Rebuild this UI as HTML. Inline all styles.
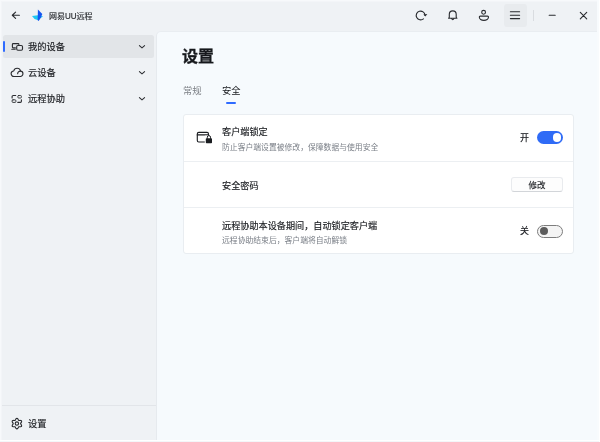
<!DOCTYPE html>
<html lang="zh-CN">
<head>
<meta charset="utf-8">
<title>网易UU远程</title>
<style>
*{box-sizing:border-box;margin:0;padding:0}
html,body{width:600px;height:442px;overflow:hidden;background:#fff}
body{font-family:"Liberation Sans","Noto Sans CJK SC",sans-serif;color:#1b1d21;position:relative}
.abs{position:absolute}
.tx{position:absolute;white-space:nowrap;will-change:transform}
#win{left:1px;top:1px;width:596.2px;height:438.5px;background:#eff2f5;border-left:1px solid #f3f5f8;border-top:1px solid #f3f5f8}
#edgeL{left:0;top:0;width:1px;height:440px;background:#f7f9fb}
#edgeT{left:0;top:0;width:598.5px;height:1px;background:#f7f9fb}
#edgeR{left:597.2px;top:0;width:1.4px;height:439.5px;background:#f8fbfd}
#edgeB{left:0;top:441px;width:598.6px;height:1px;background:#f3f6f9}
#main{left:156px;top:31px;width:441.2px;height:408.5px;background:#f6fafd;border-top-left-radius:5px;border-left:1px solid #e6eaee;border-top:1px solid #e9edf1}
#navsel{left:3px;top:35px;width:150.6px;height:23.3px;border-radius:2.5px;background:#e2e5e8}
#navbar{left:2.8px;top:41px;width:1.8px;height:11px;border-radius:1px;background:#2f6bff}
.nl{font-size:9.25px;line-height:14px;left:28.1px;color:#1b1d21;-webkit-text-stroke:0.15px #1b1d21;margin-top:0.3px}
#apptitle{left:49.3px;top:9.8px;font-size:8px;line-height:13px;color:#1f2125;-webkit-text-stroke:0.15px #1f2125}
#apptitle .uu{display:inline-block;transform:scaleY(1.18);transform-origin:50% 80%}
#footline{left:1.5px;top:405px;width:155px;height:1px;background:#e2e5e9}
h1{will-change:transform;-webkit-text-stroke:0.3px #17191d;position:absolute;left:182.4px;top:45.1px;font-size:16px;line-height:24px;font-weight:700;color:#17191d;white-space:nowrap}
.tab{font-size:9.3px;line-height:14px;top:84.3px}
#card{left:183px;top:114px;width:391px;height:140px;background:#fff;border:1px solid #e9edf1;border-radius:3px}
.t{font-size:9.15px;line-height:14px;color:#1b1d21;left:221.5px;-webkit-text-stroke:0.15px #1b1d21;margin-top:0.4px}
.d{font-size:7.82px;line-height:12px;color:#7a7f87;left:221.5px;margin-top:0.5px}
.sep{position:absolute;left:184px;width:389px;height:1px;background:#eceff2}
.sw{position:absolute;left:537px;width:26px;height:13px;border-radius:7px}
.sw.on{background:#2f6bf6}
.sw.on i{position:absolute;right:2.3px;top:2.4px;width:8.2px;height:8.2px;border-radius:50%;background:#fff}
.sw.off{background:#f4f4f4;border:1px solid #7d7d7d}
.sw.off i{position:absolute;left:1.5px;top:1.5px;width:8px;height:8px;border-radius:50%;background:#5c5c5c}
.swl{font-size:9px;line-height:13px;color:#1b1d21;left:520.2px;-webkit-text-stroke:0.15px #1b1d21;margin-top:0.6px}
#btn{will-change:transform;position:absolute;left:511px;top:177px;width:52px;height:15px;border:1px solid #e9ebee;border-bottom-color:#d2d5d9;border-radius:3px;background:#fdfdfd;font-size:8.5px;line-height:14.4px;text-align:center;color:#1b1d21;-webkit-text-stroke:0.15px #1b1d21}
#menubg{left:503.7px;top:4.2px;width:23px;height:22.5px;border-radius:3px;background:#e8ebee}
#tdiv{left:533px;top:9.7px;width:1px;height:11.6px;background:#d9dce0}
svg#ico{position:absolute;left:0;top:0}
</style>
</head>
<body>
<div id="win" class="abs"></div>
<div id="edgeL" class="abs"></div><div id="edgeT" class="abs"></div><div id="edgeR" class="abs"></div><div id="edgeB" class="abs"></div>
<div id="menubg" class="abs"></div>
<div id="tdiv" class="abs"></div>
<div id="apptitle" class="tx">网易<span class="uu">UU</span>远程</div>

<div id="navsel" class="abs"></div>
<div id="navbar" class="abs"></div>
<div class="tx nl" style="top:40px">我的设备</div>
<div class="tx nl" style="top:66px">云设备</div>
<div class="tx nl" style="top:92px">远程协助</div>
<div id="footline" class="abs"></div>
<div class="tx nl" style="top:416.5px">设置</div>

<div id="main" class="abs"></div>
<h1>设置</h1>
<div class="tx tab" style="left:182.8px;color:#7d8086">常规</div>
<div class="tx tab" style="left:222px;color:#17191d">安全</div>
<div class="abs" style="left:226px;top:102px;width:10.3px;height:2px;border-radius:1px;background:#2f6bff"></div>

<div id="card" class="abs"></div>
<div class="sep" style="top:161px"></div>
<div class="sep" style="top:207px"></div>
<div class="tx t" style="top:125.1px">客户端锁定</div>
<div class="tx d" style="top:141.2px">防止客户端设置被修改，保障数据与使用安全</div>
<div class="tx swl" style="top:131.3px">开</div>
<span class="sw on" style="top:131px"><i></i></span>
<div class="tx t" style="top:178.3px">安全密码</div>
<div id="btn">修改</div>
<div class="tx t" style="top:218.3px">远程协助本设备期间，自动锁定客户端</div>
<div class="tx d" style="top:234.4px">远程协助结束后，客户端将自动解锁</div>
<div class="tx swl" style="top:224.5px">关</div>
<span class="sw off" style="top:224.5px"><i></i></span>

<svg id="ico" width="600" height="442" viewBox="0 0 600 442" fill="none" stroke="#2a2c30" stroke-width="1.12" stroke-linecap="round" stroke-linejoin="round">
  <!-- back arrow -->
  <path d="M19.4 15.25H12.4M15.6 12.1L12.3 15.25L15.6 18.4"/>
  <!-- logo -->
  <g stroke="none">
    <path d="M32 16.1L37.9 15.3L43.2 16.4L40.6 17.9L38.3 20.3L34.6 18.9z" fill="#1fc8f2"/>
    <path d="M37.9 9.6L42.3 13.9L41 17.2L38.7 20.9L37.7 20.2z" fill="#1456f0"/>
  </g>
  <!-- refresh -->
  <path d="M423.43 18.87A4.4 4.4 0 1 1 425 15.1"/>
  <path d="M423.4 14.5L427.3 14L425.4 16.6z" fill="#2a2c30" stroke="none"/>
  <!-- bell -->
  <path d="M448.6 18.3L449.3 17.2V14.3A3.45 3.45 0 0 1 456.2 14.3V17.2L456.9 18.3z"/>
  <path d="M451.6 18.6Q452.75 20.8 453.9 18.6"/>
  <!-- user -->
  <circle cx="483.6" cy="12.3" r="1.9"/>
  <path d="M480.3 16.1H487.5A1 1 0 0 1 488.5 17.1A4.6 3.3 0 0 1 479.3 17.1A1 1 0 0 1 480.3 16.1z"/>
  <!-- menu -->
  <path d="M510.4 11.8H519.6M510.4 15.2H519.6M510.4 18.6H519.6"/>
  <!-- min / close -->
  <path d="M549.2 15.3H555.2"/>
  <path d="M580.3 12.4L586.7 18.8M586.7 12.4L580.3 18.8"/>

  <!-- nav icon 1: devices -->
  <path d="M15.4 47.9H13.2A0.8 0.8 0 0 1 12.4 47.1V44.4A0.8 0.8 0 0 1 13.2 43.6H18.1A0.8 0.8 0 0 1 18.9 44.4V44.5"/>
  <path d="M11.8 49.3H15.2"/>
  <rect x="16.7" y="45.5" width="5.8" height="4.7" rx="1.2"/>
  <!-- nav icon 2: cloud -->
  <path d="M20.3 76.45H14A2.75 2.75 0 0 1 13.75 70.95A3.5 3.5 0 0 1 20.55 70.85"/>
  <path d="M20.3 76.45A2.65 2.65 0 1 0 17.65 73.8"/>
  <!-- nav icon 3: remote -->
  <path d="M12.1 97.9V96.6A1.1 1.1 0 0 1 13.2 95.5H15.7"/>
  <rect x="17.8" y="95.5" width="3.6" height="2.5" rx="0.9" stroke-width="0.9"/>
  <rect x="12.1" y="99.8" width="3.8" height="2.6" rx="0.9" stroke-width="0.9"/>
  <path d="M21.4 99.8V101.3A1.1 1.1 0 0 1 20.3 102.4H17.8"/>
  <!-- chevrons -->
  <path d="M139.4 45.6L142 47.9L144.6 45.6M139.4 71.6L142 73.9L144.6 71.6M139.4 97.6L142 99.9L144.6 97.6" stroke-width="1.05" stroke="#2a2c30"/>
  <!-- gear -->
  <path d="M16.90 418.30L17.35 418.43L17.75 418.77L18.06 419.25L18.30 419.75L18.51 420.15L18.75 420.40L19.08 420.48L19.54 420.46L20.08 420.42L20.65 420.45L21.15 420.62L21.49 420.95L21.61 421.41L21.50 421.92L21.25 422.44L20.94 422.89L20.69 423.27L20.60 423.60L20.69 423.93L20.94 424.31L21.25 424.76L21.50 425.28L21.61 425.79L21.49 426.25L21.15 426.58L20.65 426.75L20.08 426.78L19.54 426.74L19.08 426.72L18.75 426.80L18.51 427.05L18.30 427.45L18.06 427.95L17.75 428.43L17.35 428.77L16.90 428.90L16.45 428.77L16.05 428.43L15.74 427.95L15.50 427.45L15.29 427.05L15.05 426.80L14.72 426.72L14.26 426.74L13.72 426.78L13.15 426.75L12.65 426.58L12.31 426.25L12.19 425.79L12.30 425.28L12.55 424.76L12.86 424.31L13.11 423.93L13.20 423.60L13.11 423.27L12.86 422.89L12.55 422.44L12.30 421.92L12.19 421.41L12.31 420.95L12.65 420.62L13.15 420.45L13.72 420.42L14.26 420.46L14.72 420.48L15.05 420.40L15.29 420.15L15.50 419.75L15.74 419.25L16.05 418.77L16.45 418.43z"/>
  <circle cx="16.9" cy="423.6" r="1.7"/>
  <!-- card lock icon -->
  <rect x="197.3" y="132.4" width="11.2" height="9.6" rx="1.5" stroke="#1b1d21"/>
  <path d="M197.3 134.9H208.5" stroke="#1b1d21"/>
  <rect x="204.8" y="135.6" width="8" height="8" fill="#fff" stroke="none"/>
  <rect x="205.8" y="138.2" width="6.2" height="5.1" rx="0.8" fill="#1b1d21" stroke="none"/>
  <path d="M207.3 138.4V137.2A1.6 1.6 0 0 1 210.5 137.2V138.4" stroke="#1b1d21" stroke-width="1"/>
</svg>
</body>
</html>
